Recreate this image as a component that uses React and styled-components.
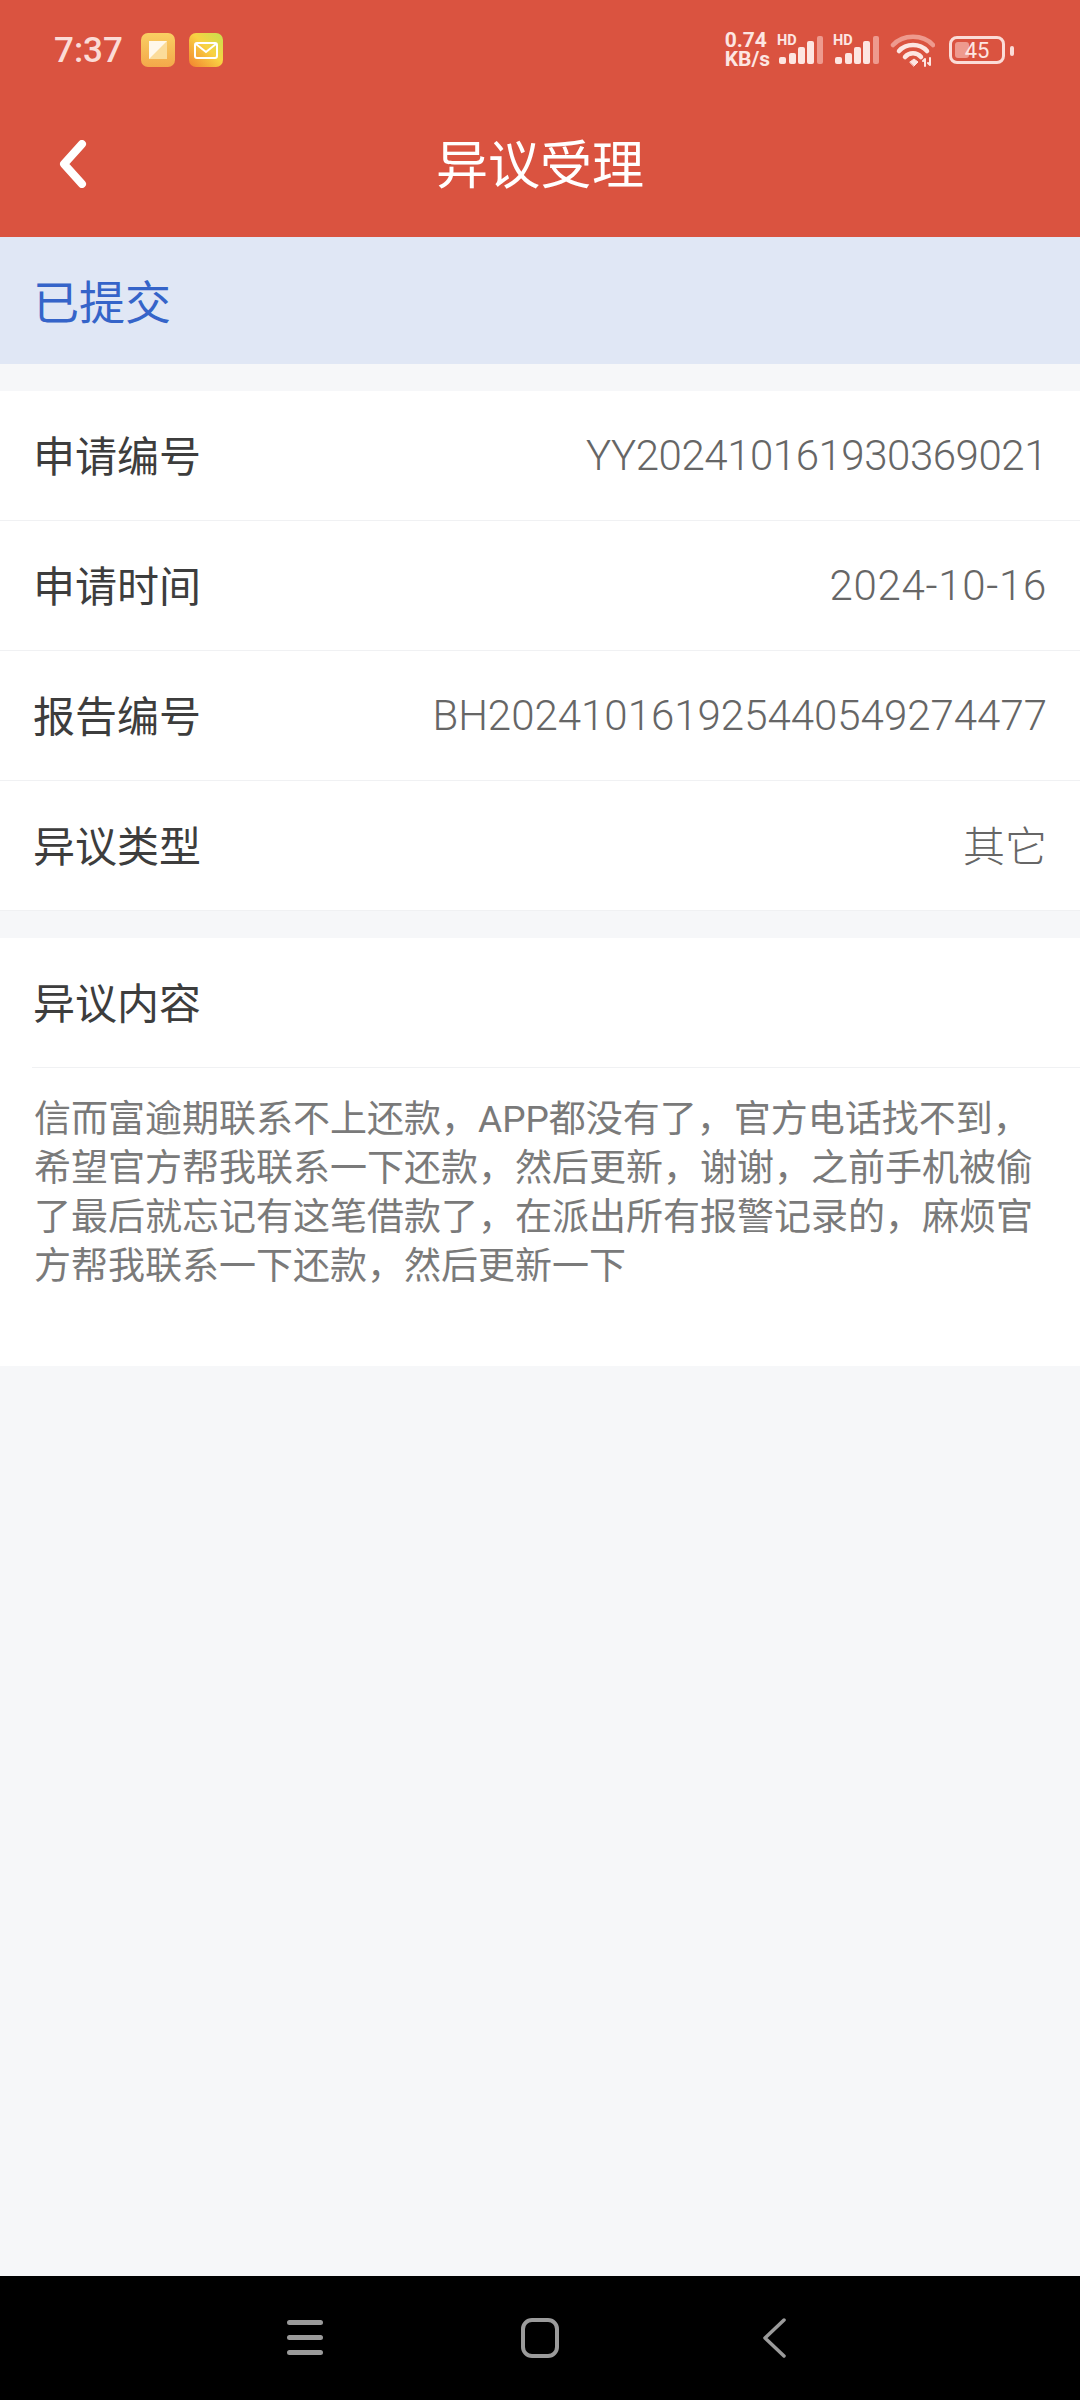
import React from 'react'
import styled, { createGlobalStyle } from 'styled-components'

const GlobalStyle = createGlobalStyle`
  html, body {
    margin: 0;
    padding: 0;
    background: #f6f7f9;
  }
  body {
    font-family: Roboto, "Noto Sans CJK SC", sans-serif;
  }
`

const rows = [
  { label: '申请编号', value: 'YY202410161930369021', track: -0.45 },
  { label: '申请时间', value: '2024-10-16', track: 0.7 },
  { label: '报告编号', value: 'BH202410161925440549274477', track: 0 },
  { label: '异议类型', value: '其它', track: 0, cjk: true },
]

const content =
  '信而富逾期联系不上还款，APP都没有了，官方电话找不到，希望官方帮我联系一下还款，然后更新，谢谢，之前手机被偷了最后就忘记有这笔借款了，在派出所有报警记录的，麻烦官方帮我联系一下还款，然后更新一下'

const Signal = () => (
  <svg width="47" height="38" viewBox="0 -4 47 38">
    <text x="0" y="10" fontFamily="Roboto, sans-serif" fontWeight="700" fontSize="14.5" fill="#fde6e2">HD</text>
    <rect x="2" y="22" width="7" height="7" rx="2" fill="#fde6e2" />
    <rect x="12" y="18" width="7" height="11" rx="2" fill="#fde6e2" />
    <rect x="21" y="12" width="7" height="17" rx="2" fill="#fde6e2" />
    <rect x="30" y="6" width="7" height="23" rx="2" fill="#fde6e2" />
    <rect x="40" y="1" width="6" height="28" rx="2" fill="#ee9a8e" />
  </svg>
)

const Wifi = () => (
  <svg width="46" height="33" viewBox="-3 0 46 33" fill="none" strokeLinecap="round">
    <path d="M1 11 C11 0 31 0 41 11" stroke="#ee9a8e" strokeWidth="4.5" />
    <path d="M7 17 C14 9 28 9 35 17" stroke="#fde6e2" strokeWidth="4.5" />
    <path d="M13 23 C17 18 25 18 29 23" stroke="#fde6e2" strokeWidth="4.5" />
    <path d="M18 28 L22 25 L26 28 L22 32 Z" fill="#fde6e2" stroke="#fde6e2" strokeWidth="1" />
    <path d="M33 32 V25 M31 27 L33 25 M38 24 V31 M36 29 L38 31" stroke="#fde6e2" strokeWidth="2" />
  </svg>
)

const App = () => {
  return (
    <Page>
      <GlobalStyle />
      <Header>
        <StatusBar>
          <StatusLeft>
            <Time>7:37</Time>
            <NotifyIcon>
              <svg width="34" height="34" viewBox="0 0 34 34">
                <defs>
                  <linearGradient id="noteBg" x1="0" y1="0" x2="0" y2="1">
                    <stop offset="0" stopColor="#f9cf63" />
                    <stop offset="1" stopColor="#f4a84a" />
                  </linearGradient>
                </defs>
                <rect width="34" height="34" rx="7" fill="url(#noteBg)" />
                <rect x="8" y="8" width="18" height="18" fill="#fbdc9a" />
                <path d="M8 8 H26 L8 26 Z" fill="#fff8ea" />
              </svg>
            </NotifyIcon>
            <NotifyIcon>
              <svg width="34" height="34" viewBox="0 0 34 34" fill="none">
                <defs>
                  <linearGradient id="mailBg" x1="1" y1="0" x2="0" y2="1">
                    <stop offset="0" stopColor="#c6e04e" />
                    <stop offset="0.45" stopColor="#f9d243" />
                    <stop offset="1" stopColor="#f2822f" />
                  </linearGradient>
                </defs>
                <rect width="34" height="34" rx="7" fill="url(#mailBg)" />
                <rect x="6" y="10" width="22" height="15" rx="2" stroke="#fff" strokeWidth="2" />
                <path d="M7 11 L17 19 L27 11" stroke="#fff" strokeWidth="2" />
              </svg>
            </NotifyIcon>
          </StatusLeft>
          <StatusRight>
            <Speed>{'0.74\nKB/s'}</Speed>
            <Signal />
            <Signal />
            <Wifi />
            <Battery>
              <BatteryFill />
              <BatteryLevel>45</BatteryLevel>
            </Battery>
          </StatusRight>
        </StatusBar>
        <TitleBar>
          <BackButton>
            <svg width="30" height="48" viewBox="0 0 30 48" fill="none">
              <path d="M25 4 L7 24 L25 44" stroke="#fff" strokeWidth="8" strokeLinecap="round" strokeLinejoin="round" />
            </svg>
          </BackButton>
          <Title>异议受理</Title>
        </TitleBar>
      </Header>

      <StatusBand>已提交</StatusBand>

      <InfoList>
        {rows.map((row) => {
          return (
            <InfoRow key={row.label}>
              <Label>{row.label}</Label>
              <Value $cjk={row.cjk} $track={row.track}>{row.value}</Value>
            </InfoRow>
          )
        })}
      </InfoList>

      <ContentCard>
        <ContentTitle>
          <Label>异议内容</Label>
        </ContentTitle>
        <ContentText>{content}</ContentText>
      </ContentCard>

      <Spacer />

      <NavBar>
        <svg width="36" height="36" viewBox="0 0 36 36">
          <rect y="0" width="36" height="5" rx="2.5" fill="#9b9b9b" />
          <rect y="15" width="36" height="5" rx="2.5" fill="#9b9b9b" />
          <rect y="30" width="36" height="5" rx="2.5" fill="#9b9b9b" />
        </svg>
        <svg width="38" height="40" viewBox="0 0 38 40" fill="none">
          <rect x="2" y="2" width="34" height="36" rx="9" stroke="#9b9b9b" strokeWidth="4" />
        </svg>
        <svg width="24" height="40" viewBox="0 0 24 40" fill="none">
          <path d="M22 2 L3 20 L22 38" stroke="#9b9b9b" strokeWidth="3.5" strokeLinecap="round" strokeLinejoin="round" />
        </svg>
      </NavBar>
    </Page>
  )
}

const Page = styled.div`
  width: 1080px;
  height: 2400px;
  display: flex;
  flex-direction: column;
  background: #f6f7f9;
  overflow: hidden;
`

const Header = styled.header`
  height: 237px;
  flex-shrink: 0;
  background: #da5340;
  display: flex;
  flex-direction: column;
`

const StatusBar = styled.div`
  height: 100px;
  padding: 0 75px 0 54px;
  display: flex;
  align-items: center;
  justify-content: space-between;
`

const StatusLeft = styled.div`
  display: flex;
  align-items: center;
  gap: 14px;
`

const Time = styled.span`
  width: 73px;
  font-size: 35px;
  font-weight: 500;
  color: #fbdcd7;
`

const NotifyIcon = styled.span`
  display: flex;
  width: 34px;
  height: 34px;
`

const StatusRight = styled.div`
  display: flex;
  align-items: center;
  gap: 9px;
`

const Speed = styled.div`
  margin-right: -2px;
  font-size: 21px;
  line-height: 19px;
  font-weight: 700;
  color: #fde6e2;
  white-space: pre;
`

const Battery = styled.div`
  position: relative;
  width: 56px;
  height: 28px;
  box-sizing: border-box;
  margin-left: 5px;
  border: 3px solid #fbdcd7;
  border-radius: 8px;
  display: flex;
  align-items: center;
  justify-content: center;

  &::after {
    content: '';
    position: absolute;
    right: -12px;
    top: 7px;
    width: 4px;
    height: 10px;
    border-radius: 2px;
    background: #fbdcd7;
  }
`

const BatteryFill = styled.span`
  position: absolute;
  left: 3px;
  top: 3px;
  bottom: 3px;
  width: 14px;
  border-radius: 3px;
  background: #ee9a8e;
`

const BatteryLevel = styled.span`
  position: relative;
  font-size: 22px;
  color: #fde6e2;
`

const TitleBar = styled.div`
  position: relative;
  height: 100px;
  margin-top: 11px;
  display: flex;
  align-items: center;
  justify-content: center;
`

const BackButton = styled.span`
  position: absolute;
  left: 57px;
  top: 29px;
  display: flex;
`

const Title = styled.h1`
  margin: 0;
  font-size: 52px;
  font-weight: 400;
  color: #fff;
`

const StatusBand = styled.div`
  height: 127px;
  flex-shrink: 0;
  padding: 0 0 3px 33px;
  box-sizing: border-box;
  display: flex;
  align-items: center;
  background: #e0e7f5;
  color: #3564c9;
  font-size: 46px;
`

const InfoList = styled.section`
  margin-top: 27px;
  background: #fff;
`

const InfoRow = styled.div`
  height: 130px;
  box-sizing: border-box;
  padding: 0 33px;
  display: flex;
  align-items: center;
  justify-content: space-between;
  border-bottom: 1px solid #f0f1f3;
`

const Label = styled.span`
  margin-bottom: 5px;
  font-size: 42px;
  color: #3d3d3d;
`

const Value = styled.span`
  margin-bottom: ${(props) => (props.$cjk ? '5px' : '0')};
  font-size: 42px;
  font-weight: 300;
  letter-spacing: ${(props) => props.$track}px;
  color: #666;
`

const ContentCard = styled.section`
  margin-top: 27px;
  height: 428px;
  flex-shrink: 0;
  background: #fff;
`

const ContentTitle = styled.div`
  height: 130px;
  box-sizing: border-box;
  margin-left: 32px;
  padding-left: 1px;
  display: flex;
  align-items: center;
  border-bottom: 1px solid #f0f1f3;
`

const ContentText = styled.p`
  margin: 0;
  padding: 27px 36px 0 34px;
  font-size: 37px;
  line-height: 49px;
  color: #7a7a7a;
`

const Spacer = styled.div`
  flex: 1;
`

const NavBar = styled.nav`
  height: 124px;
  flex-shrink: 0;
  background: #000;
  display: grid;
  grid-template-columns: 36px 38px 24px;
  column-gap: 198px;
  padding-left: 287px;
  align-items: center;
  box-sizing: border-box;

  svg:last-child {
    margin-left: 5px;
  }
`

export default App
